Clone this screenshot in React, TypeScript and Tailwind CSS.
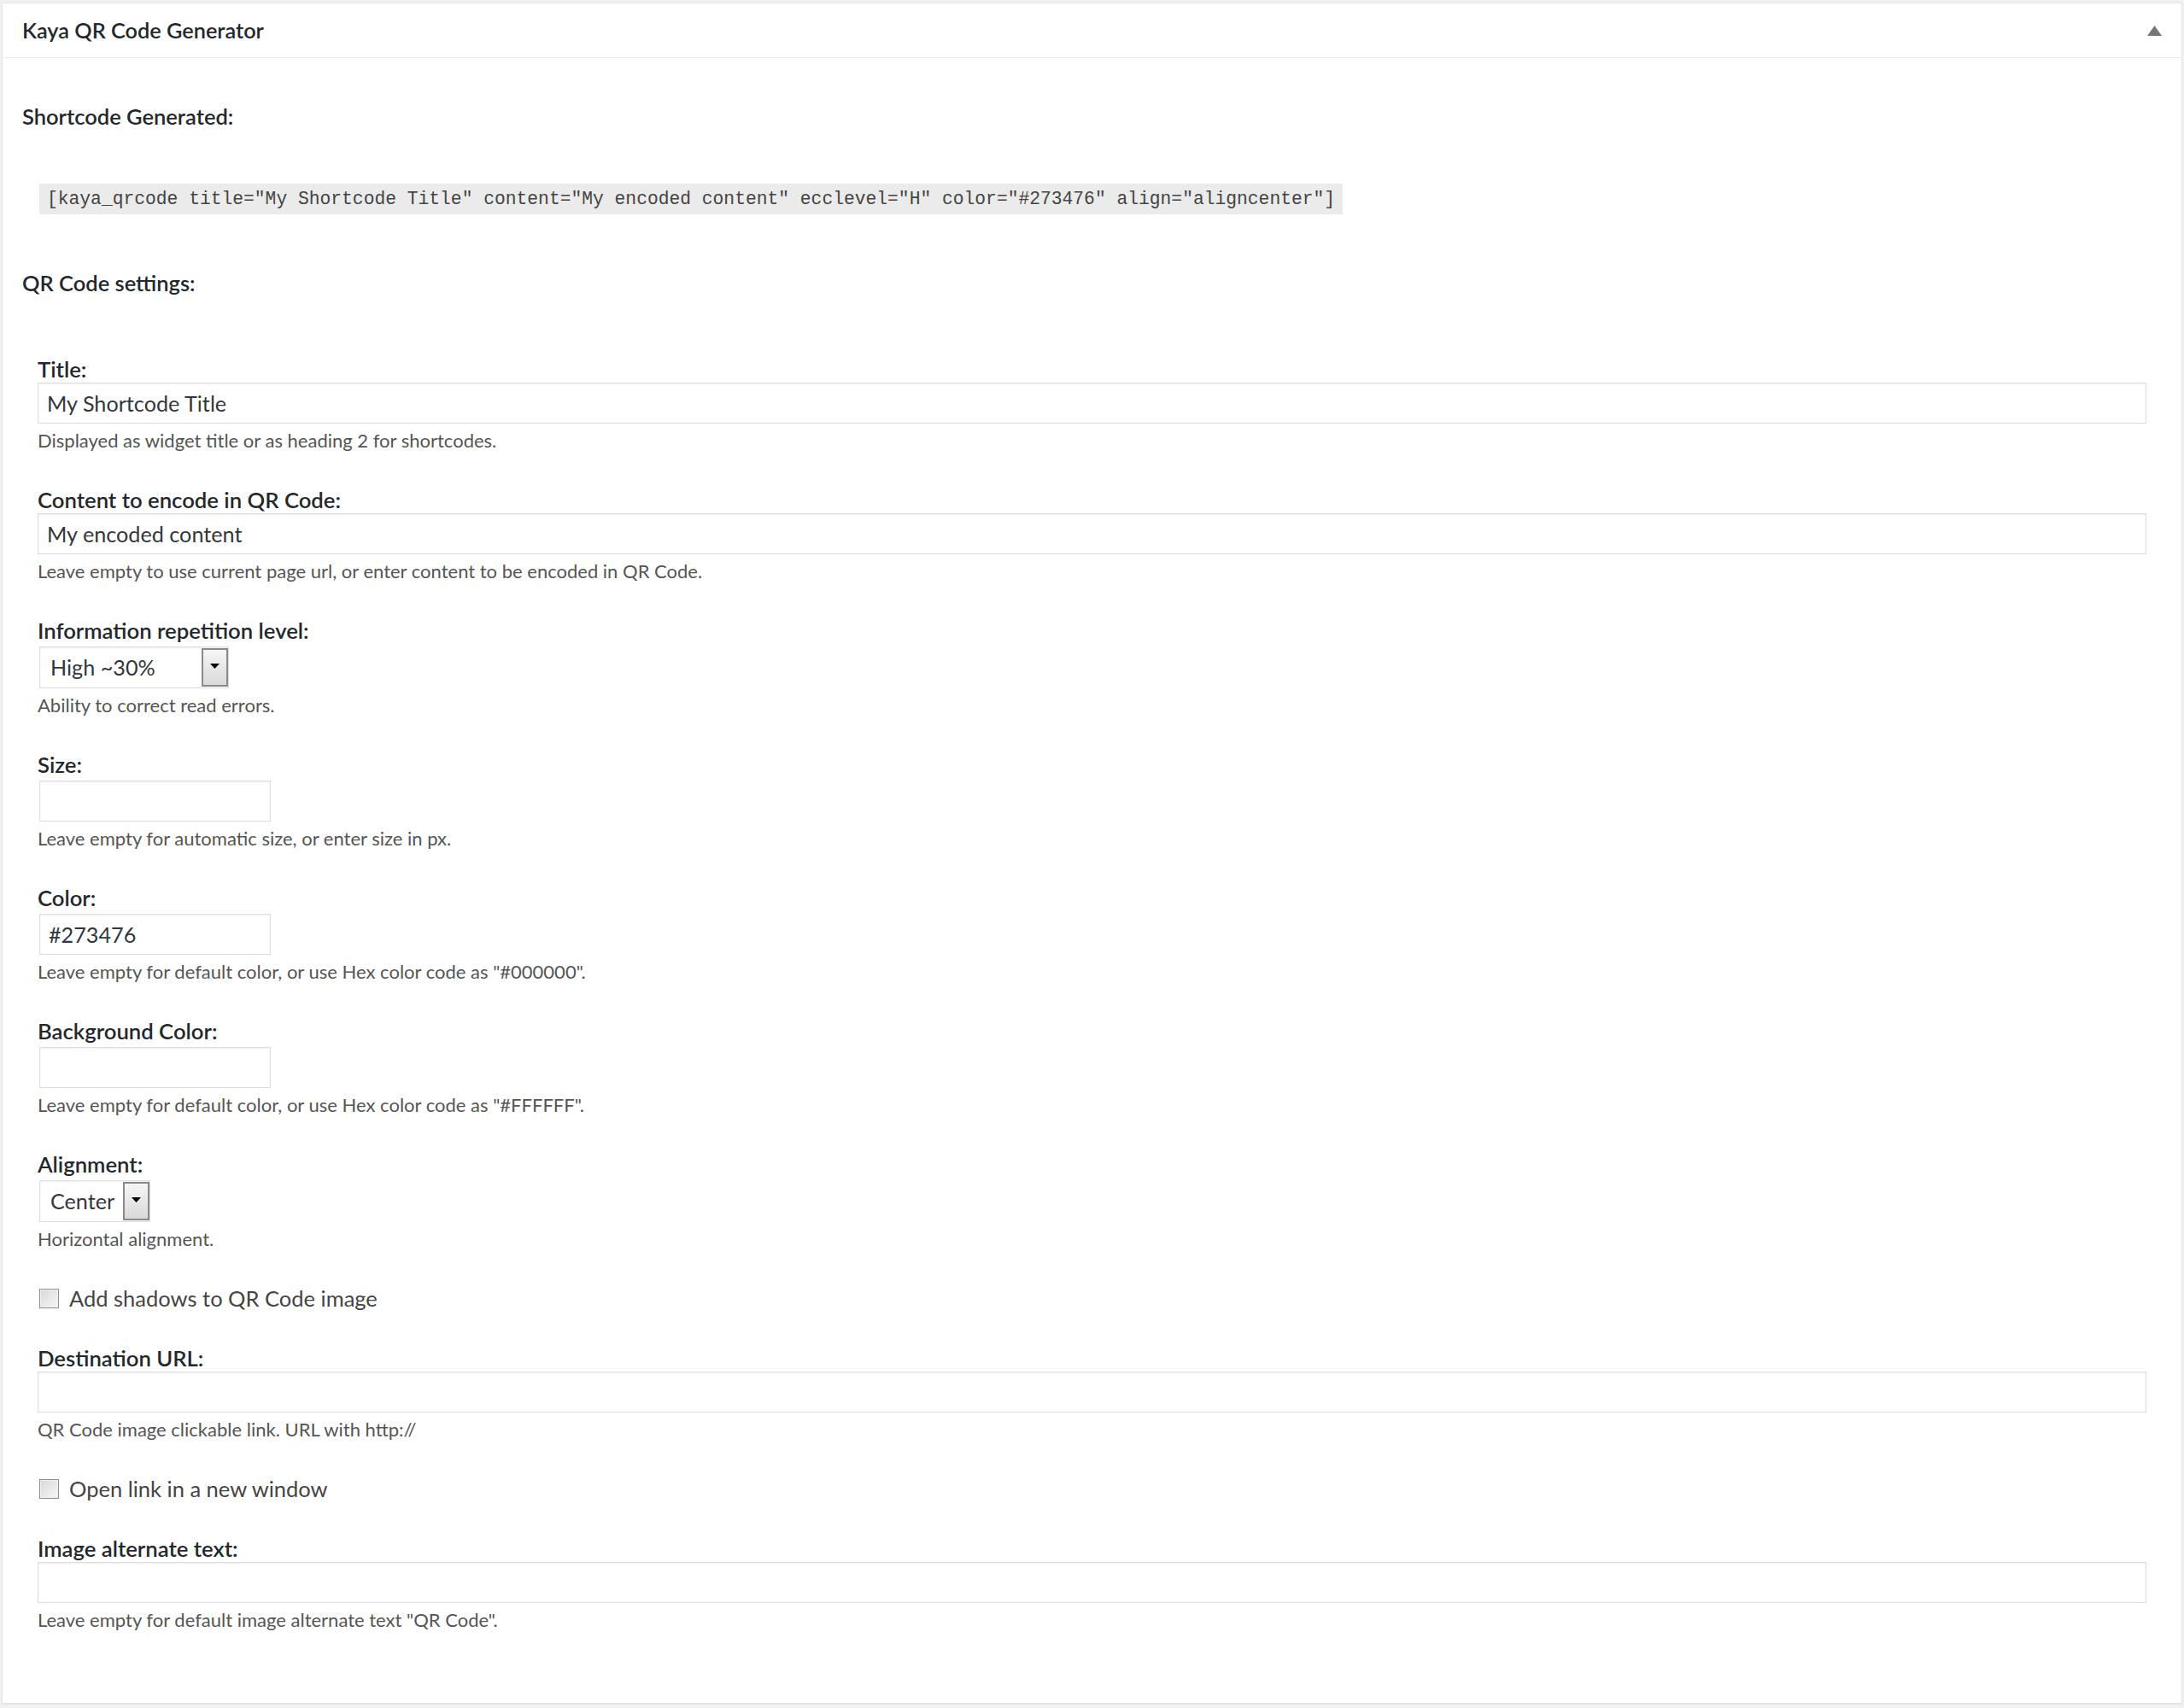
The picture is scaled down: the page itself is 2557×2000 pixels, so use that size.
import type { ReactNode } from "react";

const labelClass = "block text-[25.7px] leading-[32px] font-semibold text-[#23282d]";
const headingClass = "text-[25.5px] leading-[32px] font-semibold text-[#23282d]";
const descClass = "text-[22px] leading-[40px] text-[#555]";
const inputBase =
  "block h-[48px] border border-[#dddddd] bg-white px-[10px] text-[25.2px] text-[#32373c] shadow-[inset_0_1px_2px_rgba(0,0,0,0.07)] outline-none font-['Lato',sans-serif]";

function Field({ label, desc, children }: { label: string; desc: string; children: ReactNode }) {
  return (
    <div>
      <label className={labelClass}>{label}</label>
      {children}
      <p className={descClass}>{desc}</p>
    </div>
  );
}

function FakeSelect({ value, width }: { value: string; width: string }) {
  return (
    <div
      className={`mt-[3px] ml-[2px] flex h-[49px] items-stretch border border-[#dddddd] bg-white shadow-[inset_0_1px_2px_rgba(0,0,0,0.07)] ${width}`}
    >
      <span className="flex flex-1 items-center pl-[12px] text-[25.2px] text-[#32373c]">{value}</span>
      <span className="my-[1px] flex w-[31px] items-center justify-center border-2 border-[#8a8a8a] bg-gradient-to-b from-[#f6f6f6] to-[#d9d9d9]">
        <svg width="11" height="6" viewBox="0 0 11 6" className="-mt-[3px]">
          <path d="M0 0h11L5.5 6z" fill="#000" />
        </svg>
      </span>
    </div>
  );
}

function Checkbox({ label }: { label: string }) {
  return (
    <label className="mb-[5px] flex items-center gap-[12px] text-[25.5px] leading-[32px] text-[#444]">
      <span className="ml-[2px] h-[23px] w-[23px] shrink-0 border border-[#8e8e8e] bg-gradient-to-br from-[#d8d8d8] to-[#f7f7f7] shadow-[inset_0_0_0_1px_#f0f0f0]" />
      {label}
    </label>
  );
}

export default function App() {
  return (
    <div className="min-h-screen bg-[#f1f1f1] px-[2px] pt-[3px] font-['Lato',sans-serif]">
      <div className="border border-[#e5e5e5] bg-white shadow-[0_1px_1px_rgba(0,0,0,0.04)]">
        <div className="flex h-[64px] items-center justify-between border-b border-[#eeeeee] pl-[23px] pr-[23px]">
          <h2 className="text-[25.3px] font-semibold text-[#23282d]">Kaya QR Code Generator</h2>
          <svg width="17" height="12" viewBox="0 0 17 12">
            <path d="M8.5 0L17 12H0z" fill="#72777c" />
          </svg>
        </div>

        <div className="pb-[77px] pl-[23px] pr-[41px] pt-[52px]">
          <h4 className={headingClass}>Shortcode Generated:</h4>
          <div className="ml-[20px] mt-[63px]">
            <code className="inline-block h-[36px] bg-[#ebebeb] px-[9px] font-['Liberation_Mono',monospace] text-[21.3px] leading-[36px] text-[#444]">
              [kaya_qrcode title="My Shortcode Title" content="My encoded content" ecclevel="H" color="#273476" align="aligncenter"]
            </code>
          </div>

          <h4 className={`mt-[64px] ${headingClass}`}>QR Code settings:</h4>

          <div className="ml-[18px] mt-[69px] flex flex-col gap-[33px]">
            <Field label="Title:" desc="Displayed as widget title or as heading 2 for shortcodes.">
              <input type="text" readOnly defaultValue="My Shortcode Title" className={`${inputBase} w-full`} />
            </Field>
            <Field
              label="Content to encode in QR Code:"
              desc="Leave empty to use current page url, or enter content to be encoded in QR Code."
            >
              <input type="text" readOnly defaultValue="My encoded content" className={`${inputBase} w-full`} />
            </Field>
            <Field label="Information repetition level:" desc="Ability to correct read errors.">
              <FakeSelect value="High ~30%" width="w-[222px]" />
            </Field>
            <Field label="Size:" desc="Leave empty for automatic size, or enter size in px.">
              <input type="text" readOnly className={`${inputBase} ml-[2px] mt-[3px] w-[271px]`} />
            </Field>
            <Field label="Color:" desc={'Leave empty for default color, or use Hex color code as "#000000".'}>
              <input type="text" readOnly defaultValue="#273476" className={`${inputBase} ml-[2px] mt-[3px] w-[271px]`} />
            </Field>
            <Field label="Background Color:" desc={'Leave empty for default color, or use Hex color code as "#FFFFFF".'}>
              <input type="text" readOnly className={`${inputBase} ml-[2px] mt-[3px] w-[271px]`} />
            </Field>
            <Field label="Alignment:" desc="Horizontal alignment.">
              <FakeSelect value="Center" width="w-[130px]" />
            </Field>
            <Checkbox label="Add shadows to QR Code image" />
            <Field label="Destination URL:" desc="QR Code image clickable link. URL with http://">
              <input type="text" readOnly className={`${inputBase} w-full`} />
            </Field>
            <Checkbox label="Open link in a new window" />
            <Field label="Image alternate text:" desc={'Leave empty for default image alternate text "QR Code".'}>
              <input type="text" readOnly className={`${inputBase} w-full`} />
            </Field>
          </div>
        </div>
      </div>
    </div>
  );
}
